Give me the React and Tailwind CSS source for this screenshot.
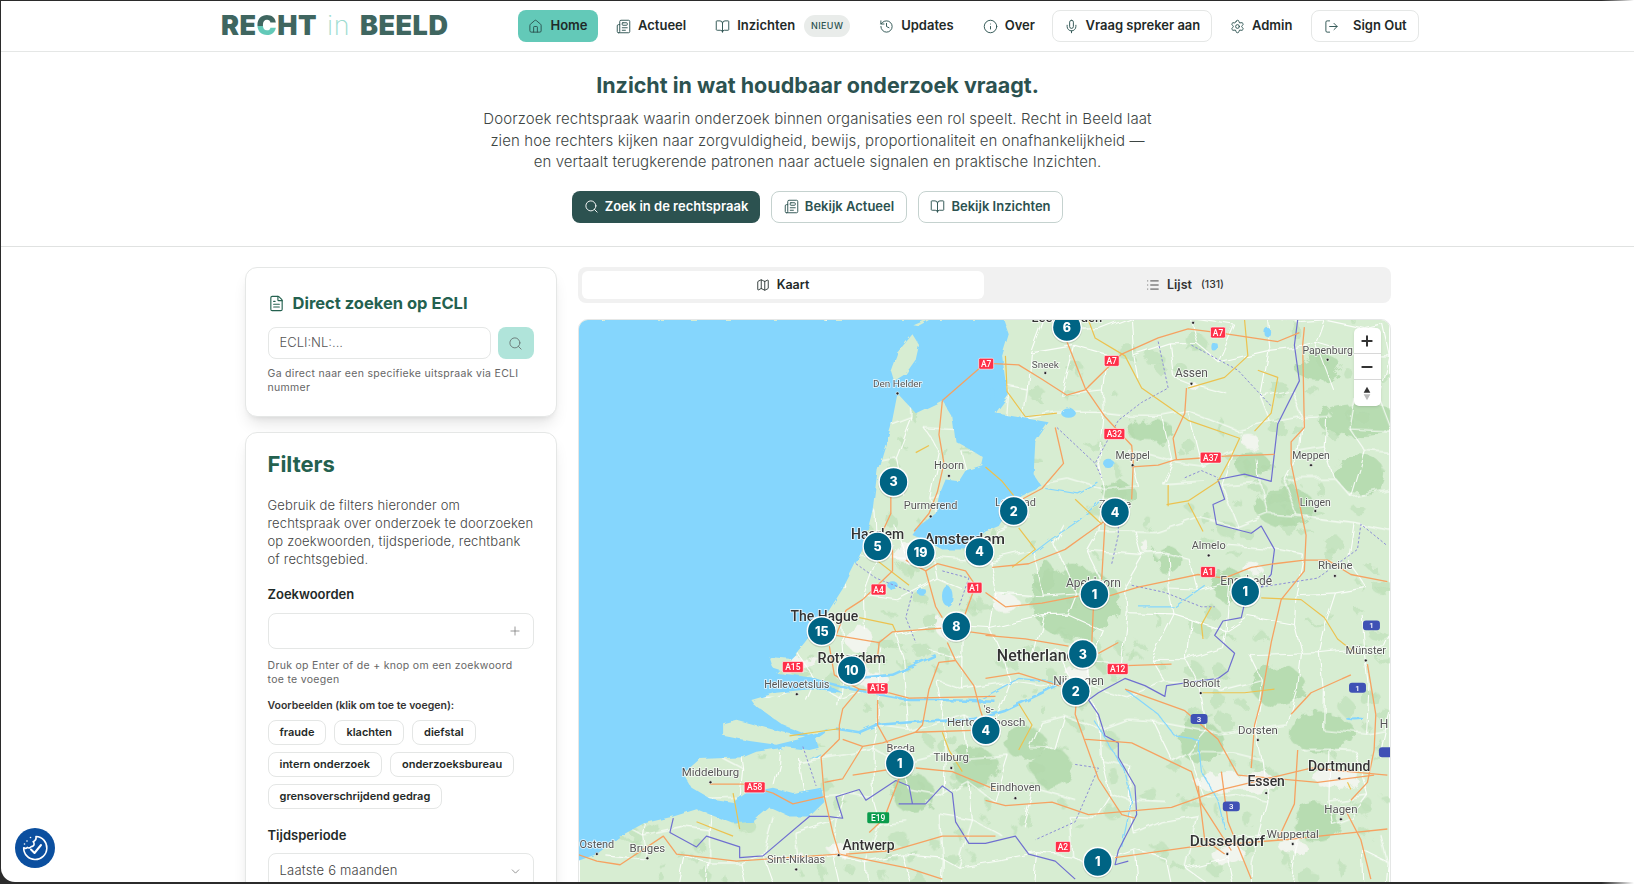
import React from 'react';
import { House, Newspaper, BookOpen, History, Info, Mic, Settings, LogOut, Search, FileText, Map as MapIcon, List, Plus, Minus, ChevronDown } from 'lucide-react';

// map drawing: points are taken from a crop of the map, px() / py() turn them into page pixels
const px = (x) => 575 + x / 3;
const py = (y) => 320 + y * 0.3597;
const L = 1230; // offset of the right half of the map

const toPath = (pts, off = 0, close = false) =>
    'M' + pts.map((p) => `${px(p[0] + off).toFixed(1)} ${py(p[1]).toFixed(1)}`).join('L') + (close ? 'Z' : '');

const sea = [[0,1510],[60,1490],[130,1440],[200,1405],[290,1385],[360,1365],[470,1405],[530,1400],[580,1360],[640,1385],[700,1385],[745,1345],[735,1305],[650,1320],[590,1305],[510,1320],[470,1345],[400,1335],[345,1305],[320,1265],[370,1225],[500,1220],[540,1205],[610,1195],[700,1225],[735,1215],[720,1170],[780,1130],[690,1110],[600,1060],[540,1080],[525,1060],[600,1040],[700,1030],[800,1040],[720,1000],[650,990],[600,985],[660,930],[745,830],[800,750],[860,640],[890,530],[905,420],[945,300],[965,205],[985,225],[1020,260],[1100,225],[1130,270],[1140,340],[1190,365],[1225,385],[1220,405],[1170,420],[1150,450],[1110,445],[1090,490],[1080,540],[1030,575],[1010,600],[1060,620],[1100,640],[1170,640],[1230,590],[1270,575],[1305,520],[1340,490],[1400,465],[1375,430],[1380,340],[1420,285],[1260,260],[1300,210],[1290,170],[1280,100],[1300,40],[1285,0],[0,0]];

const islands = [
    [[1010,40],[1030,70],[1020,110],[990,150],[955,170],[945,140],[965,90]],
    [[1010,12],[1040,0],[1060,0],[1030,15]],
    [[440,1125],[480,1115],[620,1150],[690,1165],[600,1185],[520,1175],[440,1160]],
    [[530,1072],[600,1052],[700,1060],[800,1075],[790,1135],[700,1160],[620,1130],[560,1090]],
    [[580,940],[640,945],[700,985],[640,985],[590,970]],
    [[610,1190],[700,1200],[790,1180],[700,1225],[640,1220]],
];

const rivers = [
    [[600,1000],[700,1000],[830,1030],[1000,1060],[1100,1060],[1260,1065]],
    [[780,1140],[850,1150],[900,1130],[1030,1120],[1200,1115],[1290,1090],[1400,1040],[1460,1010]],
    [[830,1000],[950,990],[1080,935]],
];
const thinRivers = [
    [[L+210,1010],[L+100,1000],[L+50,1025],[L-20,1060]],
    [[L+330,1120],[L+420,1260],[L+440,1340],[L+410,1470]],
    [[L+420,1030],[L+520,1100],[L+570,1160],[L+640,1170],[L+650,1260],[L+700,1340],[L+720,1420]],
    [[L+180,470],[L+280,485],[L+340,455]],
    [[L+130,660],[L+200,610],[L+280,560],[L+350,500]],
    [[L+460,800],[L+570,800],[L+660,740]],
];

const lakes = [[1115,770,16,30],[950,740,16,12],[1040,760,14,10],[L+250,260,22,14],[L+20,210,8,24],[L+370,400,16,14],[L+690,75,10,14],[L+850,35,10,14],[L+1320,60,10,14],[L+1110,1110,28,5]];

const orange = [
    [[1100,225],[1230,120]],[[1100,225],[1090,320],[1105,400],[1085,480],[1060,540],[1015,590]],[[945,490],[945,540],[920,590]],
    [[950,640],[950,700],[905,740],[860,780],[810,810],[780,880]],[[990,670],[1050,700],[1085,680],[1170,700],[1200,740],[1165,830],[1145,860]],
    [[1050,700],[1080,800],[1100,830]],[[780,880],[910,900],[950,870],[1100,860],[1260,880]],[[910,900],[905,940],[860,960]],
    [[1115,900],[1140,950],[1195,1020],[1215,1090],[1230,1130]],[[1140,950],[1090,955],[1060,1030],[1040,1130],[1020,1150]],
    [[760,910],[775,990],[830,1020],[850,1030],[800,1085],[790,1130],[790,1170],[735,1220],[745,1330],[770,1430],[790,1490]],
    [[850,1030],[940,1040],[1000,1055],[1260,1050]],[[905,1060],[905,1130],[935,1180],[970,1230]],[[1190,1145],[1020,1150],[920,1180],[860,1190],[800,1170]],
    [[860,1190],[800,1280],[745,1290]],[[970,1250],[830,1270]],[[1020,1250],[1130,1260],[1260,1310]],[[970,1280],[925,1390],[880,1430]],
    [[400,1295],[500,1295],[590,1320],[650,1350],[745,1330]],[[810,1490],[950,1480],[1100,1440],[1260,1440]],
    [[0,1490],[60,1510],[130,1520],[260,1440],[300,1490],[480,1510],[790,1490]],[[790,1490],[1000,1530],[1100,1560]],
    [[L-5,120],[L+100,125],[L+170,165],[L+245,210],[L+300,195],[L+360,140],[L+410,95],[L+520,50],[L+610,25],[L+700,35],[L+880,60],[L+945,35]],
    [[L+245,60],[L+300,190],[L+360,270],[L+440,350],[L+445,400],[L+440,500]],[[L+210,300],[L+235,400],[L+170,470],[L+110,500]],
    [[L+605,190],[L+600,260],[L+565,330],[L+575,390]],[[L+440,410],[L+520,405],[L+570,390],[L+650,385],[L+720,380],[L+870,375]],
    [[L+360,560],[L+350,720],[L+325,800],[L+320,900]],[[L+360,560],[L+240,640],[L+130,680],[L+20,690]],[[L+0,760],[L+60,800],[L+170,790],[L+280,770]],
    [[L+370,770],[L+460,745],[L+640,710],[L+720,720],[L+800,690],[L+870,680],[L+960,670],[L+1030,670],[L+1100,710],[L+1210,730]],
    [[L+960,20],[L+955,70],[L+960,300],[L+920,340],[L+920,400],[L+965,600],[L+960,700],[L+890,780],[L+860,900],[L+830,1060],[L+810,1130],[L+800,1250]],
    [[L+0,880],[L+120,890],[L+250,910]],[[L+340,930],[L+400,900]],[[L+400,965],[L+560,960]],[[L+0,1000],[L+100,985],[L+220,1020],[L+310,1020]],
    [[L+280,1000],[L+270,1100],[L+340,1280],[L+410,1380],[L+450,1390]],[[L+300,1170],[L+440,1180],[L+620,1260],[L+650,1350],[L+740,1480]],
    [[L+0,1340],[L+60,1355],[L+200,1345],[L+310,1380],[L+560,1360],[L+710,1310],[L+980,1250],[L+1210,1270]],[[L+420,1030],[L+600,1090],[L+700,1170],[L+760,1270]],
    [[L+1150,960],[L+1175,1100],[L+1170,1200],[L+1150,1290],[L+1100,1340]],[[L+920,1100],[L+980,1040],[L+1100,990]],[[L+760,1270],[L+1000,1290],[L+1170,1270]],
    [[L+640,1300],[L+660,1450],[L+720,1490]],[[L+390,1500],[L+620,1470],[L+900,1450],[L+1210,1420]],[[L+1080,1360],[L+1130,1450],[L+1160,1560]],
    [[L+710,1260],[L+730,1400],[L+800,1560]],[[L+940,1200],[L+930,1350],[L+880,1450]],
];

const yellow = [
    [[L+310,0],[L+330,50],[L+420,100],[L+470,190],[L+610,280],[L+765,330],[L+740,380],[L+700,450],[L+610,505],[L+545,515]],
    [[L+610,190],[L+720,160],[L+790,100],[L+780,0]],[[L+60,100],[L+65,200],[L+120,270],[L+215,260]],[[L+830,775],[L+950,780],[L+1020,830],[L+1060,890],[L+1115,930]],
    [[L+650,1040],[L+780,1040],[L+870,1030]],[[L+680,800],[L+650,850],[L+655,890]],[[L+270,500],[L+350,570]],[[L+0,410],[L+50,450],[L+85,490]],
    [[470,1320],[490,1420]],[[360,1400],[470,1440]],[[790,1140],[640,1160]],[[1100,1150],[1120,1200],[1160,1260]],[[860,640],[1000,740]],[[L+100,580],[L+150,640],[L+80,690]],
    [[L+820,140],[L+880,160],[L+860,260],[L+810,310]],[[L+550,460],[L+550,520]],[[L+610,510],[L+655,590]],[[L+1090,1290],[L+1100,1310]],[[850,830],[950,850],[960,870]],
    [[L+100,1070],[L+140,1130],[L+100,1200]],[[1020,370],[1060,350]],
];

const border = [
    [[L+940,0],[L+930,70],[L+945,170],[L+880,290],[L+860,450],[L+780,430],[L+700,445],[L+720,500],[L+685,515],[L+695,570],[L+800,595],[L+830,575],[L+870,640],[L+860,710],[L+830,745]],
    [[L+780,790],[L+770,830],[L+715,840],[L+690,880],[L+750,930],[L+730,980],[L+700,1000],[L+620,1010],[L+545,1020],[L+540,1050],[L+480,1020],[L+420,1000],[L+340,1040],[L+310,1060],[L+340,1100],[L+360,1160],[L+400,1180],[L+400,1220],[L+450,1300],[L+455,1380],[L+400,1480],[L+390,1520],[L+430,1510]],
    [[290,1390],[280,1430],[360,1470],[390,1440],[490,1470],[490,1500],[560,1495],[700,1385],[755,1385],[800,1390],[780,1330],[850,1310],[870,1340],[960,1285],[1000,1300],[1010,1350],[970,1350],[1050,1350],[1100,1300],[1130,1320],[1140,1400],[1180,1460],[L+0,1460],[L+90,1440],[L+130,1490],[L+210,1510],[L+270,1560]],
];

const dashed = [
    [[L+215,300],[L+330,400],[L+350,440]],[[L+520,60],[L+550,190],[L+470,230],[L+400,280],[L+330,400]],[[L+380,680],[L+400,600],[L+400,570]],[[L+440,740],[L+540,760],[L+650,800],[L+690,800]],
    [[L+600,440],[L+650,420],[L+700,440]],[[L+830,745],[L+1000,720],[L+1120,640],[L+1130,570],[L+1210,630]],[[L+620,70],[L+760,140],[L+860,240]],[[840,680],[900,720],[1010,760],[990,830],[1020,900]],[[1100,700],[1180,720],[1150,800]],[[680,1190],[720,1300]],[[L+270,1240],[L+340,1250],[L+270,1400],[L+150,1450]],
];

// seeded, so the texture stays the same on every load
let seed = 17;
const rnd = () => { seed = (seed * 16807) % 2147483647; return seed / 2147483647; };

const forest = [[L+270,790,130,110],[L+1010,1150,100,60],[L+880,1020,80,60],[L+1130,280,130,50],[L+650,1180,70,60],[L+550,670,40,40],[L+180,720,30,50],[L+900,520,90,60],[L+1000,130,70,40],[L+500,310,70,30],[L+730,740,50,50],[L+1130,430,70,60],[1200,1250,70,60],[L+200,1250,60,60],[L+120,1180,60,50],[1010,1320,60,60],[L+1000,1400,70,60],[L+800,400,50,40],[L+400,480,50,30]];
const mottle = Array.from({ length: 320 }, () => [rnd() * 2460, rnd() * 1568, 6 + rnd() * 26, 5 + rnd() * 22]);
const nodes = Array.from({ length: 18 }, (_, r) => Array.from({ length: 26 }, (_, c) => [c * 98 + (rnd() - 0.5) * 70, r * 94 + (rnd() - 0.5) * 60]));
const minor = [];
nodes.forEach((row, r) => row.forEach((n, c) => {
    if (c < 25 && rnd() > 0.35) minor.push([n, row[c + 1]]);
    if (r < 17 && rnd() > 0.35) minor.push([n, nodes[r + 1][c]]);
}));
const urban = [[1000,650,50,30],[850,890,40,40],[1120,860,40,30],[880,1000,55,25],[L+760,1290,130,30],[L+1060,1280,70,30],[L+730,1490,50,30],[L+925,1470,40,24],[790,1480,30,20],[L+280,990,40,30],[L+60,790,40,30],[L+480,630,16,14],[L+800,340,30,16],[L+800,690,30,14],[660,1500,30,12],[L+620,180,16,10],[680,950,50,12]];

const labels = [
    ['Den Helder',965,188,10],['Hoorn',1120,415,11],['Purmerend',1065,527,11],['Haarlem',905,610,14,1],['Amsterdam',1167,625,15.5,1],['The Hague',745,841,14,1],['Rotterdam',827,957,14.5,1],['Hellevoetsluis',662,1027,10.5],
    ['Breda',975,1204,11],['Tilburg',1127,1230,11.5],['Middelburg',402,1271,11.5],['Ostend',60,1472,11],['Bruges',212,1484,11.5],['Antwerp',878,1479,14,1],['Sint-Niklaas',660,1515,11],["'s-",1240,1097,11],['Hertogenbosch',1232,1133,11.5],
    ['Eindhoven',L+90,1315,11],['Sneek',L+180,133,10],['Assen',L+620,159,12],['Papenburg',L+1030,96,10.5],['Meppel',L+443,389,10.5],['Meppen',L+980,389,10.5],['Lingen',L+993,518,10.5],['Lelystad',L+90,520,11],['Zwolle',L+390,524,11],
    ['Almelo',L+672,638,11],['Rheine',L+1053,696,11.5],['Apeldoorn',L+325,745,12],['Enschede',L+785,739,12],['Netherlands',L+165,952,16,1],['Nijmegen',L+280,1017,12],['Bocholt',L+650,1023,11],['Münster',L+1145,931,11],['Dorsten',L+820,1154,11.5],
    ['Essen',L+845,1299,14,1],['Dortmund',L+1065,1258,14,1],['Hagen',L+1070,1375,11.5],['Wuppertal',L+925,1444,11.5],['Dusseldorf',L+728,1467,15.5,1],['Leeuwarden',L+245,6,13,1],['H',L+1200,1139,12],
];
const dots = [[965,205],[1120,435],[1065,548],[662,1044],[1127,1250],[402,1290],[60,1490],[212,1502],[788,1493],[660,1533],[L+90,1334],[L+180,148],[L+620,178],[L+1030,111],[L+443,405],[L+980,405],[L+993,533],[L+672,657],[L+1052,714],[L+648,1041],[L+1145,950],[L+820,1172],[L+845,1320],[L+1065,1279],[L+1070,1393],[L+925,1462],[L+728,1490],[L+625,8]];

const shields = [['A7',1232,122],['A7',L+380,114],['A7',L+700,35],['A32',L+388,318],['A37',L+678,384],['A1',L+670,703],['A12',L+398,974],['A2',L+233,1470],['A4',908,752],['A1',1197,747],['A15',650,968],['A15',905,1028],['A58',535,1304]];
const blueShields = [['1',L+1162,852],['1',L+1120,1026],['3',L+643,1113],['3',L+740,1357],['',L+1210,1206]];

const clusters = [['3',953,452],['5',905,632],['19',1035,649],['4',1212,647],['15',737,868],['8',1142,855],['10',827,977],['1',972,1237],['4',1231,1145],['6',L+245,20],['2',L+85,533],['4',L+390,536],['1',L+328,765],['1',L+782,758],['3',L+293,932],['2',L+272,1036],['1',L+338,1512]];

const MapDrawing = () => (
    <svg viewBox="578 320 812 564" className="block h-full w-full" style={{ fontFamily: 'Roboto, sans-serif' }}>
        <defs>
            <filter id="blotch" x="0" y="0" width="100%" height="100%">
                <feTurbulence type="fractalNoise" baseFrequency="0.07" numOctaves="3" seed="4" />
                <feDisplacementMap in="SourceGraphic" scale="16" />
                <feGaussianBlur stdDeviation="0.7" />
            </filter>
            <filter id="wiggle" x="0" y="0" width="100%" height="100%">
                <feTurbulence type="fractalNoise" baseFrequency="0.05" numOctaves="2" seed="9" />
                <feDisplacementMap in="SourceGraphic" scale="9" />
            </filter>
            <filter id="coast" x="0" y="0" width="100%" height="100%">
                <feTurbulence type="fractalNoise" baseFrequency="0.09" numOctaves="3" seed="2" />
                <feDisplacementMap in="SourceGraphic" scale="4" />
            </filter>
        </defs>
        <rect x="578" y="320" width="812" height="564" fill="#d7edd2" />
        <g filter="url(#blotch)">
            {mottle.map((m, i) => <ellipse key={i} cx={px(m[0])} cy={py(m[1])} rx={m[2] / 3} ry={m[3] / 3} fill="#bfe0b9" opacity="0.7" />)}
            {forest.map((m, i) => <ellipse key={i} cx={px(m[0])} cy={py(m[1])} rx={m[2] / 3} ry={m[3] / 3} fill="#b2d8ab" opacity="0.85" />)}
            {urban.map((m, i) => <ellipse key={i} cx={px(m[0])} cy={py(m[1])} rx={m[2] / 3} ry={m[3] / 3} fill="#f4f5f1" opacity="0.9" />)}
        </g>
        <g filter="url(#wiggle)">
            {minor.map((s, i) => <path key={i} d={toPath(s)} stroke="#fff" strokeWidth="1.1" opacity="0.9" fill="none" />)}
        </g>
        <g filter="url(#coast)">
            <path d={toPath(sea, 0, true)} fill="#85d6fd" />
            {islands.map((s, i) => <path key={i} d={toPath(s, 0, true)} fill="#d7edd2" />)}
            {rivers.map((s, i) => <path key={i} d={toPath(s)} stroke="#85d6fd" strokeWidth="2.6" fill="none" strokeLinejoin="round" />)}
            {thinRivers.map((s, i) => <path key={i} d={toPath(s)} stroke="#85d6fd" strokeWidth="1.2" fill="none" strokeLinejoin="round" />)}
            {lakes.map((m, i) => <ellipse key={i} cx={px(m[0])} cy={py(m[1])} rx={m[2] / 3} ry={m[3] / 3} fill="#85d6fd" />)}
        </g>
        {dashed.map((s, i) => <path key={i} d={toPath(s)} stroke="#8d8ed6" strokeWidth="1" strokeDasharray="2.5 2" fill="none" />)}
        {border.map((s, i) => <path key={i} d={toPath(s)} stroke="#6f6fd0" strokeWidth="1.2" fill="none" strokeLinejoin="round" />)}
        {yellow.map((s, i) => <path key={i} d={toPath(s)} stroke="#ecc24f" strokeWidth="1.2" fill="none" strokeLinejoin="round" />)}
        {orange.map((s, i) => <path key={i} d={toPath(s)} stroke="#f6a261" strokeWidth="1.3" fill="none" strokeLinejoin="round" />)}
        {dots.map((d, i) => <circle key={i} cx={px(d[0])} cy={py(d[1])} r="1.5" fill="#222" stroke="#fff" strokeWidth="0.6" />)}
        {labels.map((l, i) => (
            <text key={i} x={px(l[1])} y={py(l[2])} fontSize={l[3]} fontWeight={l[4] ? 500 : 400} fill={l[4] ? '#333' : '#555'} textAnchor="middle" stroke="#fff" strokeWidth="1.6" strokeOpacity="0.8" paintOrder="stroke">{l[0]}</text>
        ))}
        {shields.map((s, i) => {
            const w = s[0].length > 2 ? 21 : 15;
            return (
                <g key={i}>
                    <rect x={px(s[1]) - w / 2} y={py(s[2]) - 5.5} width={w} height="11" rx="1.5" fill="#ff2f48" stroke="#fff" strokeWidth="0.6" />
                    <text x={px(s[1])} y={py(s[2]) + 3} fontSize="8.5" fontWeight="500" fill="#fff" textAnchor="middle">{s[0]}</text>
                </g>
            );
        })}
        <rect x={px(907) - 11} y={py(1389) - 5.5} width="22" height="11" rx="1.5" fill="#0a9c4c" />
        <text x={px(907)} y={py(1389) + 3} fontSize="8.5" fontWeight="500" fill="#fff" textAnchor="middle">E19</text>
        {blueShields.map((s, i) => (
            <g key={i}>
                <rect x={px(s[1]) - 8.5} y={py(s[2]) - 5} width="17" height="10" rx="3" fill="#3f51b5" />
                <text x={px(s[1])} y={py(s[2]) + 3} fontSize="8" fontWeight="500" fill="#fff" textAnchor="middle">{s[0]}</text>
            </g>
        ))}
        {clusters.map((c, i) => (
            <g key={i}>
                <circle cx={px(c[1])} cy={py(c[2]) + 1} r="15.5" fill="#000" opacity="0.12" />
                <circle cx={px(c[1])} cy={py(c[2])} r="14.5" fill="#006484" stroke="#fff" strokeWidth="1.5" />
                <text x={px(c[1])} y={py(c[2]) + 4.5} fontSize="12.5" fontWeight="800" fill="#fff" textAnchor="middle" style={{ fontFamily: 'Inter, sans-serif' }}>{c[0]}</text>
            </g>
        ))}
    </svg>
);

const NavLink = ({ icon: Icon, label, className = '' }) => (
    <a className={`flex h-8 items-center gap-[7px] rounded-lg text-[13px] font-semibold text-[#1f2a28] ${className}`}>
        <Icon size={15} strokeWidth={1.5} className="text-[#2c5250]" />
        {label}
    </a>
);

const HeroButton = ({ icon: Icon, label, className }) => (
    <button className={`flex h-8 items-center gap-[6px] rounded-lg text-[13px] font-semibold ${className}`}>
        <Icon size={15} strokeWidth={1.5} />
        {label}
    </button>
);

const Chip = ({ children }) => (
    <span className="flex h-[25px] items-center rounded-lg border border-[#e4e6e5] px-[11px] text-[11px] font-semibold text-[#1f2a28]">{children}</span>
);

const CookieBadge = () => (
    <div className="absolute bottom-[14px] left-[14px] flex h-10 w-10 items-center justify-center rounded-full bg-[#0b4f9f]">
        <svg viewBox="0 0 32 32" className="h-8 w-8" fill="none" stroke="#fff" strokeWidth="1.6" strokeLinecap="round" strokeLinejoin="round">
            <path d="M17 4.5c6.5.3 11 5.500 10.800 11.700-.2 6.400-5.500 11.500-12 11.300C9.500 27.300 4.500 22 4.700 15.700c1 .7 2.600.8 3.500-.3 1.300 1 3.400.6 4-.9 1.500.1 2.900-1 2.900-2.600 0-.9-.4-1.700-1-2.200C16 9 17.300 6.700 17 4.500z" />
            <path d="M12 17.500l3.500 3.500 6.500-8" strokeWidth="2" />
            <circle cx="8" cy="9" r="0.8" fill="#fff" stroke="none" />
            <circle cx="11.500" cy="5.500" r="0.8" fill="#fff" stroke="none" />
            <circle cx="5.500" cy="12" r="0.8" fill="#fff" stroke="none" />
        </svg>
    </div>
);

const App = () => {
    return (
        <div className="h-[884px] w-full overflow-hidden bg-linear-to-r from-[#2b2b2b] from-[98%] to-white pt-px pb-[2px] pl-px" style={{ fontFamily: 'Inter, sans-serif' }}>
            <div className="relative h-[881px] overflow-hidden rounded-bl-[14px] bg-white">
                {/* header */}
                <header className="flex h-[51px] items-center border-b border-[#e5e7e6] pl-[220px]">
                    <div className="flex w-[297px] items-baseline text-[27px] font-black tracking-[0.5px] text-[#3f6660]">
                        <span>RE</span>
                        <span className="bg-linear-to-b from-[#3f6660] from-50% to-[#63c9b8] to-50% bg-clip-text text-transparent">C</span>
                        <span>HT</span>
                        <span className="mx-[10px] font-extralight text-[#9ddcd0]">in</span>
                        <span>BEELD</span>
                    </div>
                    <NavLink icon={House} label="Home" className="w-[80px] justify-center bg-[#63c9b8]" />
                    <NavLink icon={Newspaper} label="Actueel" className="ml-[18px]" />
                    <NavLink icon={BookOpen} label="Inzichten" className="ml-[29px]" />
                    <span className="ml-[9px] flex h-[22px] w-[46px] items-center justify-center rounded-full bg-[#e9ecea] text-[9px] font-medium tracking-[0.4px] text-[#2c5250]">NIEUW</span>
                    <NavLink icon={History} label="Updates" className="ml-[29px]" />
                    <NavLink icon={Info} label="Over" className="ml-[29px]" />
                    <NavLink icon={Mic} label="Vraag spreker aan" className="ml-[17px] w-[160px] justify-center border border-[#e5e7e6]" />
                    <NavLink icon={Settings} label="Admin" className="ml-[18px]" />
                    <NavLink icon={LogOut} label="Sign Out" className="ml-[19px] w-[108px] justify-center gap-[14px] border border-[#e5e7e6]" />
                </header>

                {/* hero */}
                <section className="flex h-[195px] flex-col items-center border-b border-[#e0e2e1] pt-[16px]">
                    <h1 className="text-[21.500px] leading-[34px] font-bold text-[#2c5250]">Inzicht in wat houdbaar onderzoek vraagt.</h1>
                    <p className="mt-[6px] w-[720px] text-center text-[15px] leading-[21.500px] font-light tracking-[0.1px] text-[#3d4543]">
                        Doorzoek rechtspraak waarin onderzoek binnen organisaties een rol speelt. Recht in Beeld laat<br />
                        zien hoe rechters kijken naar zorgvuldigheid, bewijs, proportionaliteit en onafhankelijkheid —<br />
                        en vertaalt terugkerende patronen naar actuele signalen en praktische Inzichten.
                    </p>
                    <div className="mt-[18px] flex gap-[11px]">
                        <HeroButton icon={Search} label="Zoek in de rechtspraak" className="w-[188px] justify-center bg-[#2c5250] text-white" />
                        <HeroButton icon={Newspaper} label="Bekijk Actueel" className="w-[136px] justify-center border border-[#c5d2cf] text-[#2c5250]" />
                        <HeroButton icon={BookOpen} label="Bekijk Inzichten" className="w-[145px] justify-center border border-[#c5d2cf] text-[#2c5250]" />
                    </div>
                </section>

                {/* content */}
                <main className="mx-auto flex w-[1146px] gap-[21px] pt-[20px]">
                    <aside className="flex w-[312px] shrink-0 flex-col gap-[15px]">
                        <div className="h-[150px] rounded-xl border border-[#e5e7e6] bg-white px-[22px] pt-[23px] shadow-lg shadow-black/10">
                            <div className="flex items-center gap-[8px]">
                                <FileText size={17} strokeWidth={1.6} className="text-[#24614f]" />
                                <h2 className="text-[16.500px] leading-[24px] font-bold text-[#24614f]">Direct zoeken op ECLI</h2>
                            </div>
                            <div className="mt-[12px] flex gap-[7px]">
                                <div className="flex h-8 w-[223px] items-center rounded-lg border border-[#e5e7e6] px-[11px] text-[13px] font-light text-[#555]">ECLI:NL:...</div>
                                <div className="flex h-8 w-9 items-center justify-center rounded-lg bg-[#b0e4da]">
                                    <Search size={15} strokeWidth={1.5} className="text-[#6b7a77]" />
                                </div>
                            </div>
                            <p className="mt-[8px] text-[10.500px] leading-[14px] tracking-[0.3px] text-[#666]">Ga direct naar een specifieke uitspraak via ECLI nummer</p>
                        </div>

                        <div className="rounded-xl border border-[#e5e7e6] bg-white px-[22px] pt-[16px] pb-6 shadow-lg shadow-black/10">
                            <h2 className="text-[22px] leading-[30px] font-bold text-[#24614f]">Filters</h2>
                            <p className="mt-[17px] text-[13px] leading-[18px] font-light tracking-[0.15px] whitespace-nowrap text-[#444]">
                                Gebruik de filters hieronder om<br />
                                rechtspraak over onderzoek te doorzoeken<br />
                                op zoekwoorden, tijdsperiode, rechtbank<br />
                                of rechtsgebied.
                            </p>
                            <h3 className="mt-[17px] text-[13px] leading-[18px] font-semibold text-[#1f2a28]">Zoekwoorden</h3>
                            <div className="mt-[10px] flex h-9 items-center justify-end rounded-lg border border-[#e5e7e6] pr-[11px]">
                                <Plus size={14} strokeWidth={1.3} className="text-[#777]" />
                            </div>
                            <p className="mt-[10px] text-[10.500px] leading-[14px] tracking-[0.3px] whitespace-nowrap text-[#666]">
                                Druk op Enter of de + knop om een zoekwoord<br />
                                toe te voegen
                            </p>
                            <h4 className="mt-[12px] text-[10.500px] leading-[14px] font-semibold text-[#333]">Voorbeelden (klik om toe te voegen):</h4>
                            <div className="mt-[7px] flex flex-wrap gap-x-2 gap-y-[7px]">
                                <Chip>fraude</Chip>
                                <Chip>klachten</Chip>
                                <Chip>diefstal</Chip>
                                <Chip>intern onderzoek</Chip>
                                <Chip>onderzoeksbureau</Chip>
                                <Chip>grensoverschrijdend gedrag</Chip>
                            </div>
                            <h3 className="mt-[17px] text-[13px] leading-[18px] font-semibold text-[#1f2a28]">Tijdsperiode</h3>
                            <div className="mt-[9px] flex h-9 items-center justify-between rounded-lg border border-[#e5e7e6] pr-[11px] pl-[11px] text-[13px] font-light tracking-[0.2px] text-[#444]">
                                Laatste 6 maanden
                                <ChevronDown size={13} strokeWidth={1.4} className="text-[#777]" />
                            </div>
                        </div>
                    </aside>

                    <div className="flex min-w-0 flex-1 flex-col gap-[16px]">
                        <div className="flex h-9 items-center rounded-lg bg-[#f1f1f1] p-1">
                            <div className="flex h-[28px] w-[402px] items-center justify-center gap-[7px] rounded-md bg-white text-[12.500px] font-semibold text-[#1f2a28]">
                                <MapIcon size={14} strokeWidth={1.5} />
                                Kaart
                            </div>
                            <div className="flex h-[28px] flex-1 items-center justify-center gap-[7px] text-[12.500px] font-semibold text-[#333]">
                                <List size={14} strokeWidth={1.5} />
                                Lijst
                                <span className="ml-[2px] text-[10.500px] font-medium">(131)</span>
                            </div>
                        </div>

                        <div className="relative h-[564px] overflow-hidden rounded-t-[10px] border border-[#e5e7e6]">
                            <MapDrawing />
                            <div className="absolute top-[8px] right-[9px] flex w-[27px] flex-col divide-y divide-[#d8d8d8] rounded-[5px] bg-white shadow-sm">
                                <div className="flex h-[26px] items-center justify-center"><Plus size={16} strokeWidth={3} className="text-[#333]" /></div>
                                <div className="flex h-[26px] items-center justify-center"><Minus size={16} strokeWidth={3} className="text-[#333]" /></div>
                                <div className="flex h-[26px] items-center justify-center">
                                    <svg viewBox="0 0 12 18" className="h-[15px] w-[10px]">
                                        <path d="M6 1l4 7H2z" fill="#333" />
                                        <path d="M6 17l4-7H2z" fill="#bbb" />
                                    </svg>
                                </div>
                            </div>
                        </div>
                    </div>
                </main>

                <CookieBadge />
            </div>
        </div>
    );
};

export default App;
